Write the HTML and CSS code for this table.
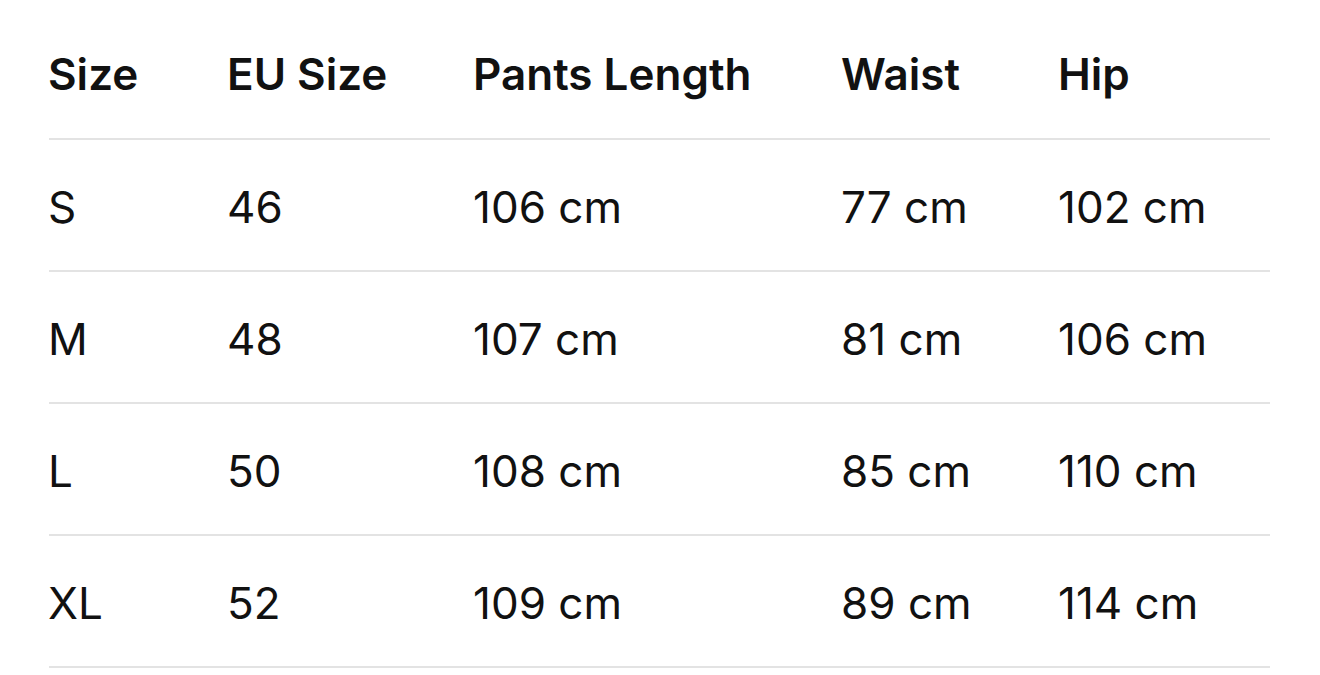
FILE: index.html
```html
<!DOCTYPE html>
<html>
<head>
<meta charset="utf-8">
<link rel="stylesheet" href="styles.css">
</head>
<body>
<div class="table">
  <div class="row head">
    <div>Size</div><div>EU Size</div><div>Pants Length</div><div>Waist</div><div>Hip</div>
  </div>
  <div class="row">
    <div>S</div><div>46</div><div>106 cm</div><div>77 cm</div><div>102 cm</div>
  </div>
  <div class="row">
    <div>M</div><div>48</div><div>107 cm</div><div>81 cm</div><div>106 cm</div>
  </div>
  <div class="row">
    <div>L</div><div>50</div><div>108 cm</div><div>85 cm</div><div>110 cm</div>
  </div>
  <div class="row">
    <div>XL</div><div>52</div><div>109 cm</div><div>89 cm</div><div>114 cm</div>
  </div>
</div>
</body>
</html>
```
FILE: styles.css
```css
html, body {
  margin: 0;
  padding: 0;
  background: #ffffff;
}
body {
  font-family: Inter, "Noto Sans", sans-serif;
  color: #111111;
}
.table {
  display: flex;
  flex-direction: column;
  margin-left: 49px;
  width: 1221px;
}
.row {
  display: grid;
  grid-template-columns: 178px 246px 368px 217px 1fr;
  align-items: center;
  box-sizing: border-box;
  height: 132px;
  padding-top: 4px;
  border-bottom: 2px solid #e3e3e3;
  font-size: 44px;
  font-weight: 400;
}
.row > div:first-child {
  margin-left: -1px;
}
.row.head {
  height: 140px;
  padding-top: 10px;
  font-weight: 600;
}
```
